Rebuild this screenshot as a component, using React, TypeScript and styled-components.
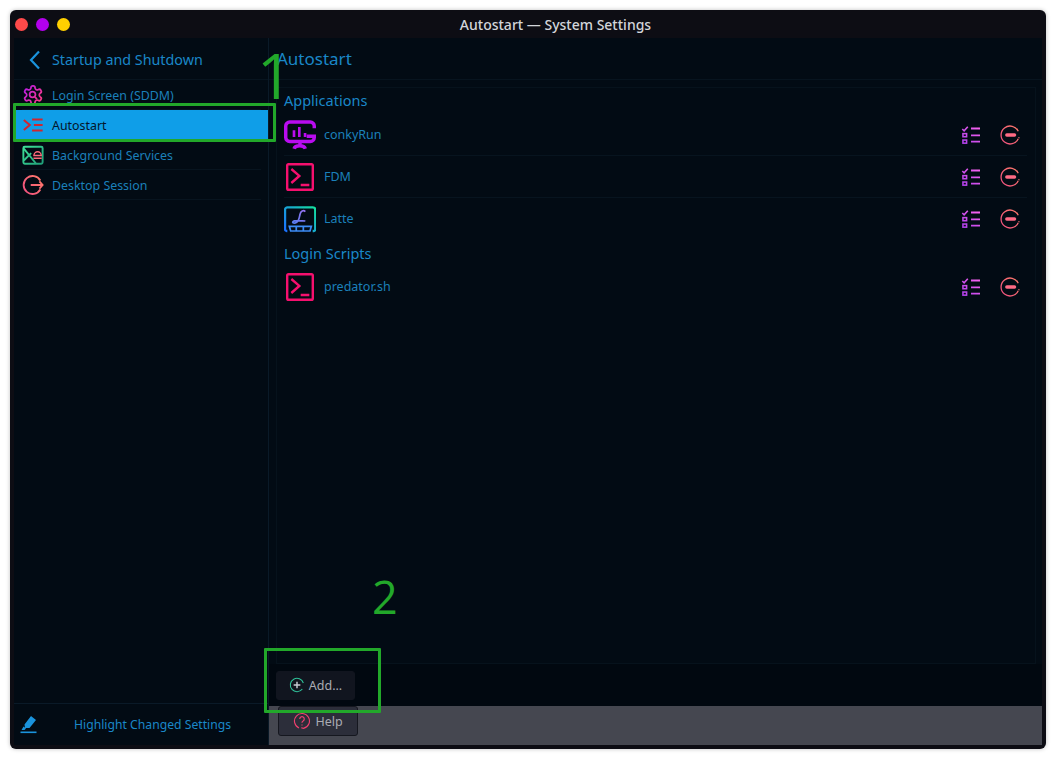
import React from 'react'
import styled, { createGlobalStyle } from 'styled-components'

const GlobalStyle = createGlobalStyle`
  * {
    box-sizing: border-box;
  }
  html, body {
    margin: 0;
    background: #ffffff;
    font-family: "Noto Sans", "Liberation Sans", sans-serif;
  }
`
const StyledWindow = styled.div`
  position: relative;
  display: flex;
  flex-direction: column;
  width: 1036px;
  height: 739px;
  margin: 10px;
  padding: 0 4px 4px;
  border-radius: 6px;
  overflow: hidden;
  background: #0d0d14;
  box-shadow: 0 0 4px rgba(0, 0, 0, 0.25);
`
const StyledTitleBar = styled.div`
  position: relative;
  display: flex;
  align-items: center;
  justify-content: center;
  flex: 0 0 28px;
  padding-left: 55px;
  color: #d3d5da;
  font-size: 14px;
  font-weight: 500;
`
const StyledLights = styled.div`
  position: absolute;
  left: 1px;
  top: 8px;
  display: flex;
  gap: 8px;
`
const StyledLight = styled.span<{ $color: string }>`
  width: 13px;
  height: 13px;
  border-radius: 50%;
  background: ${p => p.$color};
`
const StyledBody = styled.div`
  display: flex;
  flex: 1;
  min-height: 0;
`
const StyledSidebar = styled.aside`
  display: flex;
  flex-direction: column;
  flex: 0 0 255px;
  background: #020b14;
  border-right: 1px solid #0a1a28;
`
const StyledBack = styled.div`
  display: flex;
  align-items: center;
  gap: 10px;
  height: 42px;
  padding: 2px 0 0 12px;
  border-bottom: 1px solid #07141f;
  color: #1a87c8;
  font-size: 14.3px;
`
const StyledNav = styled.nav`
  display: flex;
  flex-direction: column;
  flex: 1;
`
const StyledNavItem = styled.div<{ $active?: boolean }>`
  position: relative;
  display: flex;
  align-items: center;
  gap: 8px;
  height: 30px;
  padding-left: 8px;
  background: ${p => (p.$active ? '#0f9ee8' : 'transparent')};
  color: ${p => (p.$active ? '#04162b' : '#1b80ba')};
  font-size: 12.4px;
  &::after {
    content: '';
    position: absolute;
    left: 8px;
    right: 7px;
    bottom: 0;
    height: 1px;
    background: ${p => (p.$active ? 'transparent' : '#07141f')};
  }
`
const StyledFooter = styled.div`
  display: flex;
  align-items: center;
  height: 42px;
  padding-left: 6px;
  border-top: 1px solid #0a1a28;
  color: #1a87c8;
  font-size: 12.2px;
`
const StyledFooterText = styled.span`
  margin-left: 37px;
`
const StyledMain = styled.main`
  display: flex;
  flex-direction: column;
  flex: 1;
  min-width: 0;
  background: #010810;
`
const StyledMainHeader = styled.div`
  display: flex;
  align-items: center;
  flex: 0 0 42px;
  padding-left: 8px;
  border-bottom: 1px solid #07141f;
  background: #020b14;
  color: #1a87c8;
  font-size: 17px;
`
const StyledPanelWrap = styled.div`
  display: flex;
  flex: 1;
  min-height: 0;
  padding: 7px 6px 0 7px;
  background: #020b14;
`
const StyledPanel = styled.section`
  flex: 1;
  padding: 0 8px 0 7px;
  border: 1px solid #06121c;
  background: #020b14;
`
const StyledSectionTitle = styled.div<{ $pad: number }>`
  display: flex;
  align-items: center;
  height: 26px;
  padding-bottom: ${p => p.$pad}px;
  color: #1a87c8;
  font-size: 14.5px;
`
const StyledRow = styled.div`
  display: flex;
  align-items: center;
  gap: 8px;
  height: 42px;
  border-bottom: 1px solid #07141f;
  &:last-child {
    border-bottom-color: transparent;
  }
`
const StyledRowName = styled.span`
  flex: 1;
  color: #1b80ba;
  font-size: 12.5px;
`
const StyledActions = styled.div`
  display: flex;
  align-items: center;
  gap: 17px;
  padding-right: 6px;
`
const StyledButtonRow = styled.div`
  display: flex;
  align-items: center;
  flex: 0 0 42px;
  padding-left: 7px;
  background: #010810;
`
const StyledButton = styled.button<{ $bg: string; $line: string; $width: number; $height: number }>`
  display: flex;
  align-items: center;
  justify-content: center;
  gap: 4px;
  width: ${p => p.$width}px;
  height: ${p => p.$height}px;
  padding: 0;
  border: 1px solid ${p => p.$line};
  border-radius: 3px;
  background: ${p => p.$bg};
  color: #a9abb3;
  font-family: inherit;
  font-size: 12.5px;
`
const StyledHelpBar = styled.div`
  flex: 0 0 39px;
  padding-left: 9px;
  background: #454750;
`
const StyledBox = styled.div<{ $left: number; $top: number; $width: number; $height: number }>`
  position: absolute;
  left: ${p => p.$left}px;
  top: ${p => p.$top}px;
  width: ${p => p.$width}px;
  height: ${p => p.$height}px;
  border: 3px solid #22a82a;
  border-radius: 1px;
  pointer-events: none;
`
const StyledDigit = styled.span<{ $left: number; $top: number; $size: number }>`
  position: absolute;
  left: ${p => p.$left}px;
  top: ${p => p.$top}px;
  color: #22a82a;
  font-family: "Open Sans", sans-serif;
  font-size: ${p => p.$size}px;
  font-weight: 500;
  line-height: 0.75;
  pointer-events: none;
`
const StyledDefs = styled.svg`
  position: absolute;
  width: 0;
  height: 0;
`

const Gradients = () => (
  <StyledDefs aria-hidden="true">
    <defs>
      <linearGradient id="gear" gradientUnits="userSpaceOnUse" x1="2" y1="4" x2="22" y2="20">
        <stop offset="0" stopColor="#b81be8" />
        <stop offset="1" stopColor="#ff3d7f" />
      </linearGradient>
      <linearGradient id="coral" gradientUnits="userSpaceOnUse" x1="2" y1="20" x2="22" y2="4">
        <stop offset="0" stopColor="#f0507f" />
        <stop offset="1" stopColor="#ff7a6a" />
      </linearGradient>
      <linearGradient id="list" gradientUnits="userSpaceOnUse" x1="2" y1="22" x2="22" y2="2">
        <stop offset="0" stopColor="#a83ce8" />
        <stop offset="1" stopColor="#ff66f0" />
      </linearGradient>
      <linearGradient id="mint" gradientUnits="userSpaceOnUse" x1="2" y1="2" x2="22" y2="22">
        <stop offset="0" stopColor="#3fe39a" />
        <stop offset="1" stopColor="#1f9e78" />
      </linearGradient>
      <linearGradient id="latte" gradientUnits="userSpaceOnUse" x1="2" y1="22" x2="22" y2="2">
        <stop offset="0" stopColor="#1a70ff" />
        <stop offset="1" stopColor="#14e0a0" />
      </linearGradient>
      <linearGradient id="latteInk" gradientUnits="userSpaceOnUse" x1="6" y1="18" x2="18" y2="5">
        <stop offset="0" stopColor="#4a80f0" />
        <stop offset="1" stopColor="#a070f0" />
      </linearGradient>
    </defs>
  </StyledDefs>
)

const Icon: React.FC<{ size: number; stroke?: string; width?: number; children: React.ReactNode }> = ({
  size,
  stroke = 'currentColor',
  width = 2,
  children,
}) => (
  <svg width={size} height={size} viewBox="0 0 24 24" fill="none" stroke={stroke} strokeWidth={width} style={{ flex: 'none' }}>
    {children}
  </svg>
)

const GearIcon = () => (
  <Icon size={22} stroke="url(#gear)" width={1.9}>
    <path d="M12.22 2h-.44a2 2 0 0 0-2 2v.18a2 2 0 0 1-1 1.73l-.43.25a2 2 0 0 1-2 0l-.15-.08a2 2 0 0 0-2.73.73l-.22.38a2 2 0 0 0 .73 2.73l.15.1a2 2 0 0 1 1 1.72v.51a2 2 0 0 1-1 1.74l-.15.09a2 2 0 0 0-.73 2.73l.22.38a2 2 0 0 0 2.73.73l.15-.08a2 2 0 0 1 2 0l.43.25a2 2 0 0 1 1 1.73V20a2 2 0 0 0 2 2h.44a2 2 0 0 0 2-2v-.18a2 2 0 0 1 1-1.73l.43-.25a2 2 0 0 1 2 0l.15.08a2 2 0 0 0 2.73-.73l.22-.39a2 2 0 0 0-.73-2.73l-.15-.08a2 2 0 0 1-1-1.74v-.5a2 2 0 0 1 1-1.74l.15-.09a2 2 0 0 0 .73-2.73l-.22-.38a2 2 0 0 0-2.73-.73l-.15.08a2 2 0 0 1-2 0l-.43-.25a2 2 0 0 1-1-1.73V4a2 2 0 0 0-2-2z" />
    <circle cx="11.5" cy="11.5" r="3.2" />
    <path d="M14 14l2.4 2.4" />
  </Icon>
)

const AutostartIcon = () => (
  <Icon size={22} stroke="#cf2630" width={2.3}>
    <path d="M2 6.500L8.500 12 2 17.500" />
    <path d="M11 6h11.500M13 12h9.500M11 18h11.500" />
  </Icon>
)

const BackgroundIcon = () => (
  <Icon size={22} stroke="url(#mint)" width={2.1}>
    <rect x="1.500" y="3" width="21" height="18.500" rx="1.500" />
    <path d="M2 5l13 16M2 18l8-8" />
    <path d="M13 12.500a4 4 0 0 1 8 0zM12.500 15.500h9" stroke="#ff6a7a" strokeWidth="1.500" />
  </Icon>
)

const LogoutIcon = () => (
  <Icon size={22} stroke="url(#coral)" width={2}>
    <path d="M20 7a9.800 9.800 0 1 0 0 10" />
    <path d="M9.500 12H23M19 8l3.500 4-3.500 4" />
  </Icon>
)

const MonitorIcon = () => (
  <Icon size={32} stroke="#b90cf0" width={2.6}>
    <path d="M22.700 7V5.300a3 3 0 0 0-3-3H4.300a3 3 0 0 0-3 3v8.500a3 3 0 0 0 3 3h15.400a3 3 0 0 0 3-3V13H17" />
    <path d="M7.500 13.500v-5M11.500 13.500V6M15.800 13.500v-3" strokeWidth="2" />
    <path d="M12 17v2M7.500 22.300c1-2.900 7.500-2.900 8.500 0" />
  </Icon>
)

const TerminalIcon = () => (
  <Icon size={32} stroke="#f5106e" width={1.8}>
    <rect x="2.400" y="2.400" width="19.200" height="19.200" rx="1" />
    <path d="M5.500 6l6 5.200-6 5.300M12.500 18H19" />
  </Icon>
)

const LatteIcon = () => (
  <Icon size={32} stroke="url(#latte)" width={1.700}>
    <path d="M2.500 21h-.500a1.200 1.200 0 0 1-1.200-1.200V5a1.800 1.800 0 0 1 1.800-1.800h19a1.800 1.800 0 0 1 1.800 1.800v14.800A1.200 1.200 0 0 1 22 21h-.500" />
    <path d="M16 6.500c-1.500-1.500-3.500-.500-4 2s-.8 5-2.500 6-3.500.500-2.800-.500 3.500-1 9.300-.500" stroke="url(#latteInk)" strokeWidth="1.300" />
    <path d="M4 17.500h16.500L19.500 21H5zM9.200 17.500V21M14.500 17.500V21" stroke="#3d8cf5" strokeWidth="1.300" />
  </Icon>
)

const ChecklistIcon = () => (
  <Icon size={22} stroke="url(#list)" width={1.700}>
    <path d="M2.500 5.500l2 2 4-4.500" />
    <rect x="3.200" y="10.500" width="4" height="3.400" />
    <rect x="3.200" y="17.500" width="4" height="3.400" />
    <path d="M12 5h9.800M12 12.400h9.800M12 19.200h9.800" strokeWidth="2.100" />
  </Icon>
)

const RemoveIcon = () => (
  <Icon size={22} stroke="url(#coral)" width={1.400}>
    <path d="M21 8A9.800 9.800 0 1 0 21 16" />
    <path d="M21.500 15.500l.500-1" />
    <path d="M8.500 12h8.500" stroke="#ff6b85" strokeWidth="3.600" strokeLinecap="round" />
  </Icon>
)

const AddIcon = () => (
  <Icon size={16} stroke="#2fc29a" width={1.600}>
    <path d="M21.500 9A10 10 0 1 0 20 18" />
    <path d="M12 7v10M7 12h10" stroke="#c8ccd4" strokeWidth="2.200" />
  </Icon>
)

const HelpIcon = () => (
  <Icon size={18} stroke="#f0406f" width={1.500}>
    <path d="M8 21.200A10 10 0 1 1 14 21.800L11 21" />
    <path d="M9 9.300a3 3 0 1 1 4.500 2.600c-1 .6-1.500 1.200-1.500 2.400" strokeWidth="1.600" />
    <path d="M12 16.500v1.500" strokeWidth="1.600" />
  </Icon>
)

const HighlightIcon = () => (
  <svg width="17" height="19" viewBox="0 0 17 19" fill="#1a93dc" style={{ flex: 'none' }}>
    <path d="M11 1l5 4-6.500 8H5l-.5-3.500zM3.500 11.500l2.500 2-1.500 1.500H1.500z" />
    <rect x="0.500" y="16.500" width="16" height="1.600" />
  </svg>
)

const BackIcon = () => (
  <svg width="16" height="20" viewBox="0 0 16 20" fill="none" stroke="#1a93dc" strokeWidth="2.200" style={{ flex: 'none' }}>
    <path d="M13 1.500L5 10l8 8.500" />
  </svg>
)

const navItems = [
  { label: 'Login Screen (SDDM)', icon: <GearIcon /> },
  { label: 'Autostart', icon: <AutostartIcon />, active: true },
  { label: 'Background Services', icon: <BackgroundIcon /> },
  { label: 'Desktop Session', icon: <LogoutIcon /> },
]

const Entry: React.FC<{ name: string; icon: React.ReactNode }> = ({ name, icon }) => (
  <StyledRow>
    {icon}
    <StyledRowName>{name}</StyledRowName>
    <StyledActions>
      <ChecklistIcon />
      <RemoveIcon />
    </StyledActions>
  </StyledRow>
)

const App: React.FC = () => {
  return (
    <StyledWindow>
      <GlobalStyle />
      <Gradients />
      <StyledTitleBar>
        <StyledLights>
          <StyledLight $color="#ff4a4a" />
          <StyledLight $color="#b400ee" />
          <StyledLight $color="#ffd000" />
        </StyledLights>
        Autostart — System Settings
      </StyledTitleBar>
      <StyledBody>
        <StyledSidebar>
          <StyledBack>
            <BackIcon />
            Startup and Shutdown
          </StyledBack>
          <StyledNav>
            {navItems.map(item => (
              <StyledNavItem key={item.label} $active={item.active}>
                {item.icon}
                {item.label}
              </StyledNavItem>
            ))}
          </StyledNav>
          <StyledFooter>
            <HighlightIcon />
            <StyledFooterText>Highlight Changed Settings</StyledFooterText>
          </StyledFooter>
        </StyledSidebar>
        <StyledMain>
          <StyledMainHeader>Autostart</StyledMainHeader>
          <StyledPanelWrap>
            <StyledPanel>
              <StyledSectionTitle $pad={2}>Applications</StyledSectionTitle>
              <div>
                <Entry name="conkyRun" icon={<MonitorIcon />} />
                <Entry name="FDM" icon={<TerminalIcon />} />
                <Entry name="Latte" icon={<LatteIcon />} />
              </div>
              <StyledSectionTitle $pad={0}>Login Scripts</StyledSectionTitle>
              <div>
                <Entry name="predator.sh" icon={<TerminalIcon />} />
              </div>
            </StyledPanel>
          </StyledPanelWrap>
          <StyledButtonRow>
            <StyledButton $bg="#11151f" $line="#11151f" $width={79} $height={29}>
              <AddIcon />
              Add...
            </StyledButton>
          </StyledButtonRow>
          <StyledHelpBar>
            <StyledButton $bg="#2c2e3a" $line="#15171f" $width={80} $height={30}>
              <HelpIcon />
              Help
            </StyledButton>
          </StyledHelpBar>
        </StyledMain>
      </StyledBody>
      <StyledBox $left={3} $top={93} $width={263} $height={39} />
      <StyledBox $left={254} $top={638} $width={117} $height={65} />
      <StyledDigit $left={247} $top={42} $size={62}>1</StyledDigit>
      <StyledDigit $left={362} $top={570} $size={45}>2</StyledDigit>
    </StyledWindow>
  )
}

export default App
